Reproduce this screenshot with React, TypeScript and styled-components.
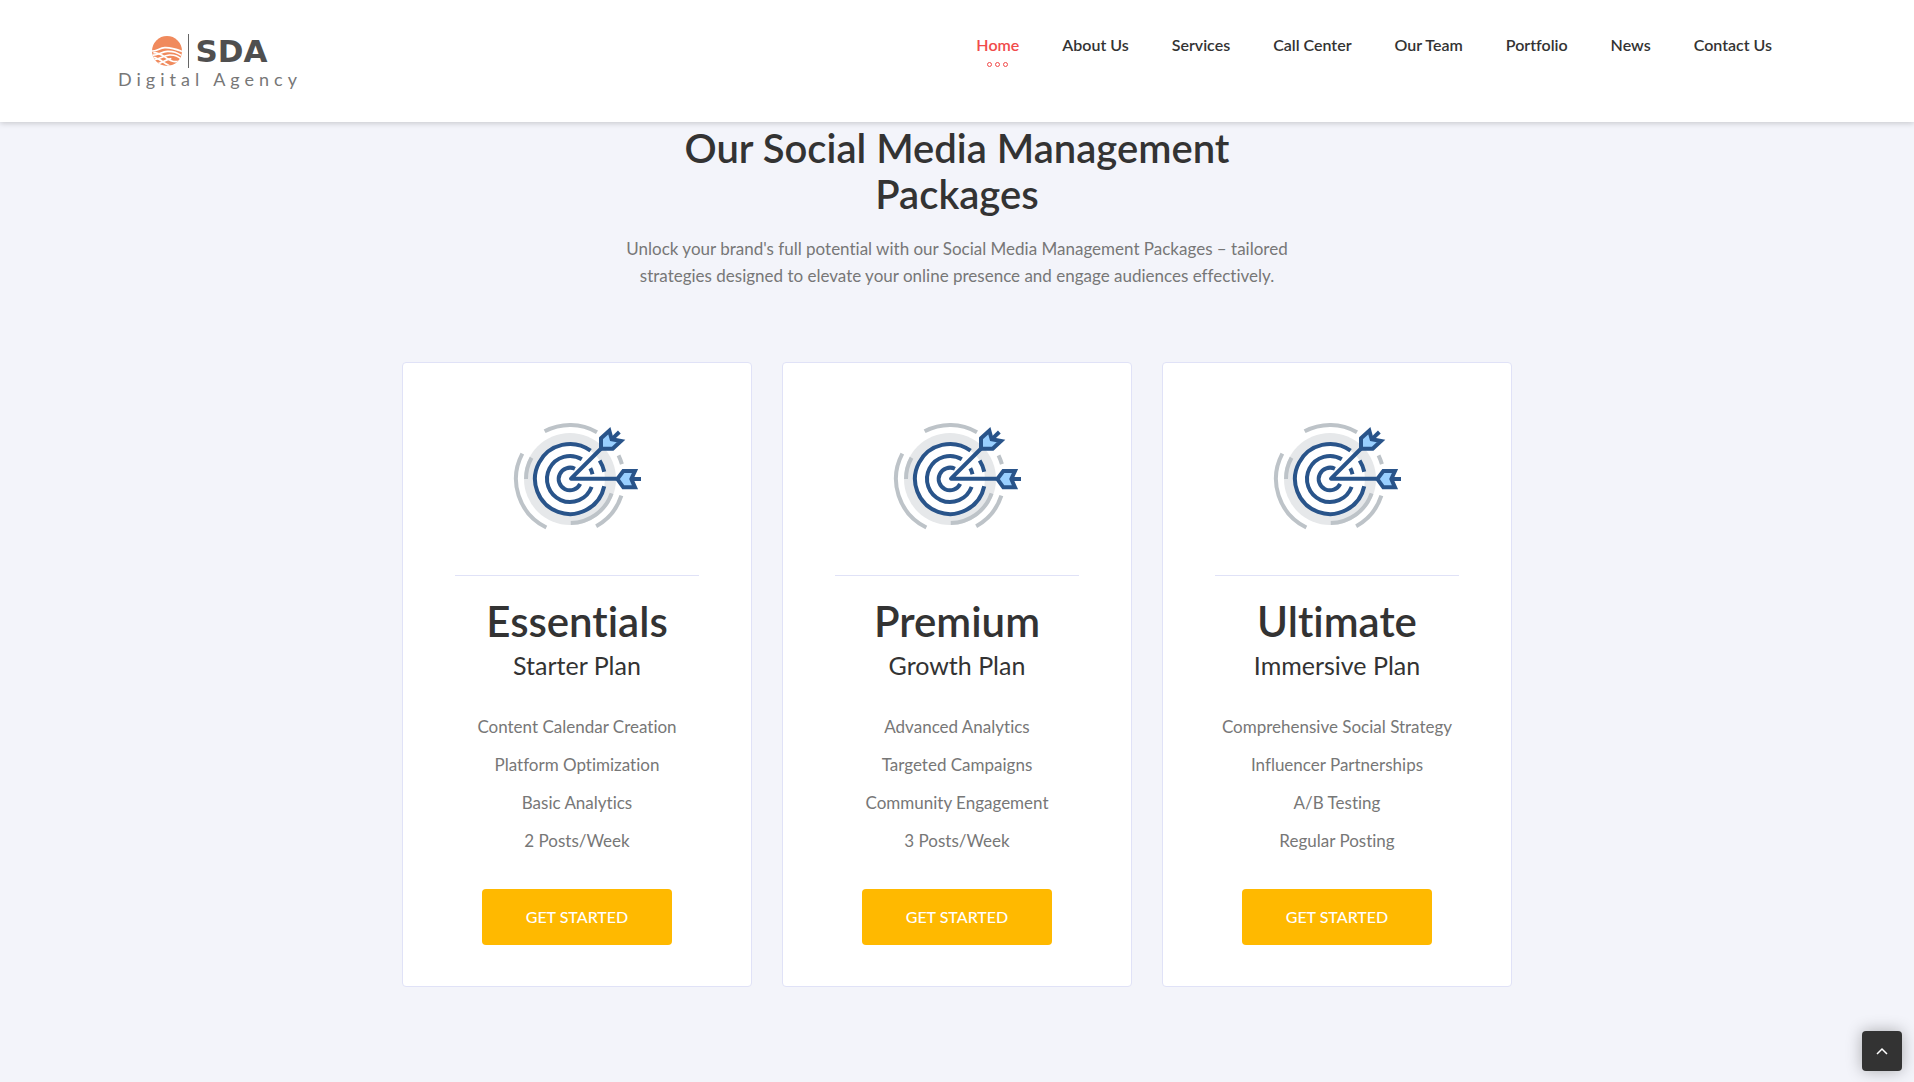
import React from "react";
import styled, { createGlobalStyle } from "styled-components";

const GlobalStyle = createGlobalStyle`
  *, *::before, *::after { box-sizing: border-box; }
  body {
    margin: 0;
    background: #f3f4fa;
    color: #333;
    font-family: Lato, "Open Sans", sans-serif;
    font-size: 17px;
    font-variant-ligatures: none;
  }
`;

const Header = styled.header`
  position: relative;
  display: flex;
  justify-content: space-between;
  align-items: flex-start;
  height: 122px;
  padding: 34px 142px 0 118px;
  background: #fff;
  box-shadow: 0 1px 6px rgba(0, 0, 0, 0.2);
`;

const Brand = styled.a`
  display: flex;
  flex-direction: column;
  align-items: center;
  color: #777;
  text-decoration: none;
`;

const BrandMark = styled.span`
  display: flex;
  align-items: center;
  height: 34px;
`;

const BrandRule = styled.span`
  width: 1px;
  height: 34px;
  margin: 0 6px;
  background: #666;
`;

const BrandName = styled.strong`
  color: #4f4f4f;
  font-family: "DejaVu Sans", sans-serif;
  font-size: 31px;
  font-weight: 700;
  line-height: 34px;
`;

const BrandLine = styled.span`
  font-size: 18px;
  line-height: 22px;
  letter-spacing: 5px;
`;

const Menu = styled.ul`
  display: flex;
  gap: 43px;
  margin: 0;
  padding: 0;
  list-style: none;
`;

const MenuLink = styled.a<{ $active?: boolean }>`
  display: flex;
  flex-direction: column;
  align-items: center;
  gap: 6px;
  color: ${(p) => (p.$active ? "#f14b4b" : "#333")};
  font-size: 16px;
  font-weight: 600;
  line-height: 22px;
  text-decoration: none;
`;

const Dots = styled.span`
  display: flex;
  gap: 3px;

  i {
    width: 5px;
    height: 5px;
    border: 1px solid #f14b4b;
    border-radius: 50%;
  }
`;

const Section = styled.section`
  display: flex;
  flex-direction: column;
  align-items: center;
  padding: 3px 15px 95px;
`;

const Intro = styled.div`
  max-width: 690px;
  margin-bottom: 73px;
  text-align: center;
`;

const Title = styled.h2`
  max-width: 600px;
  margin: 0 auto 18px;
  font-size: 40px;
  font-weight: 600;
  line-height: 46px;
`;

const Lead = styled.p`
  margin: 0;
  color: #777;
  font-size: 17px;
  line-height: 27px;
`;

const Cards = styled.div`
  display: grid;
  grid-template-columns: repeat(3, 1fr);
  gap: 30px;
  width: 100%;
  max-width: 1110px;
`;

const Card = styled.article`
  display: flex;
  flex-direction: column;
  align-items: center;
  padding: 57px 52px 41px;
  border: 1px solid #e0e2f7;
  border-radius: 4px;
  background: #fff;
  text-align: center;
`;

const IconArea = styled.div`
  align-self: stretch;
  padding-bottom: 45px;
  margin-bottom: 21px;
  border-bottom: 1px solid #e0e2f7;

  svg { display: block; margin: 0 auto; }
`;

const PlanName = styled.h3`
  margin: 0;
  font-size: 42px;
  font-weight: 600;
  line-height: 48px;
`;

const PlanKind = styled.p`
  margin: 4px 0 27px;
  font-size: 25px;
  line-height: 32px;
`;

const Features = styled.ul`
  margin: 0 0 29px;
  padding: 0;
  color: #777;
  font-size: 17px;
  line-height: 38px;
  list-style: none;
  white-space: nowrap;
`;

const Start = styled.button`
  width: 190px;
  height: 56px;
  border: 0;
  border-radius: 4px;
  background: #ffb900;
  color: #fff;
  font: 500 16px/24px Lato, sans-serif;
  text-transform: uppercase;
  cursor: pointer;
`;

const ToTop = styled.button`
  position: fixed;
  right: 12px;
  bottom: 11px;
  display: grid;
  place-items: center;
  width: 40px;
  height: 40px;
  padding: 0;
  border: 0;
  border-radius: 4px;
  background: #333;
  box-shadow: 0 0 16px rgba(0, 0, 0, 0.3);
  cursor: pointer;
`;

function arc(r: number, from: number, to: number) {
  const at = (deg: number) => {
    const a = (deg * Math.PI) / 180;
    return `${(240 + r * Math.cos(a)).toFixed(1)} ${(237 + r * Math.sin(a)).toFixed(1)}`;
  };
  return `M${at(from)}A${r} ${r} 0 ${to - from > 180 ? 1 : 0} 1 ${at(to)}`;
}

function TargetIcon() {
  return (
    <svg width="130" height="110" viewBox="66 60 390 330" fill="none" aria-hidden="true">
      <circle cx="240" cy="237" r="138" fill="#e6e8ea" />
      <circle cx="240" cy="237" r="105" fill="#fff" />
      <g stroke="#bdc3c8" strokeWidth="12">
        <path d={arc(162, -118, -60)} />
        <path d={arc(162, 116, 208)} />
        <path d={arc(162, 18, 61)} />
        <path d={arc(162, -26, -16)} />
        <path d={arc(132, 180, 209)} />
        <path d={arc(132, 19, 89)} />
      </g>
      <g stroke="#29548a" strokeWidth="12">
        <path d={arc(105, 12, 306)} />
        <path d={arc(105, -32, -12)} />
        <path d={arc(69, 20, 301)} />
        <path d={arc(69, -28, -12)} />
        <path d={arc(34, 26, 296)} />
        <path d="M338 141L243 236H380" strokeLinejoin="round" />
        <path d="M333 115L358 92L365 118L393 123L368 146H333Z" fill="#99cfff" />
        <path d="M365 118L388 96" />
        <path d="M382 237L400 213H435L424 237L435 262H400Z" fill="#99cfff" />
        <path d="M422 237H453" />
      </g>
    </svg>
  );
}

function SunMark() {
  return (
    <svg width="30" height="30" viewBox="0 0 90 90" aria-hidden="true">
      <clipPath id="sun"><circle cx="45" cy="45" r="45" /></clipPath>
      <g clipPath="url(#sun)">
        <path fill="#f08a5d" d="M0 0H90V90H0Z" />
        <g fill="none" stroke="#fff" strokeWidth="5">
          <path d="M-2 45C14 46 22 36 38 35S66 37 92 47" />
          <path d="M-2 58C20 58 28 47 46 46S74 50 92 60" />
          <path d="M4 50C24 50 34 60 48 69S66 78 84 76" />
          <path d="M2 72C22 70 34 58 52 57S78 62 92 72" />
          <path d="M2 64C16 64 26 72 36 80S50 90 66 92" />
          <path d="M14 84C30 82 42 70 58 68" />
        </g>
      </g>
    </svg>
  );
}

const links = ["Home", "About Us", "Services", "Call Center", "Our Team", "Portfolio", "News", "Contact Us"];

const plans = [
  { name: "Essentials", kind: "Starter Plan", features: ["Content Calendar Creation", "Platform Optimization", "Basic Analytics", "2 Posts/Week"] },
  { name: "Premium", kind: "Growth Plan", features: ["Advanced Analytics", "Targeted Campaigns", "Community Engagement", "3 Posts/Week"] },
  { name: "Ultimate", kind: "Immersive Plan", features: ["Comprehensive Social Strategy", "Influencer Partnerships", "A/B Testing", "Regular Posting"] },
];

export default function App() {
  return (
    <>
      <GlobalStyle />
      <Header>
        <Brand href="#">
          <BrandMark>
            <SunMark />
            <BrandRule />
            <BrandName>SDA</BrandName>
          </BrandMark>
          <BrandLine>Digital Agency</BrandLine>
        </Brand>
        <nav>
          <Menu>
            {links.map((label, i) => (
              <li key={label}>
                <MenuLink href="#" $active={i === 0}>
                  {label}
                  {i === 0 && <Dots><i /><i /><i /></Dots>}
                </MenuLink>
              </li>
            ))}
          </Menu>
        </nav>
      </Header>
      <main>
        <Section>
          <Intro>
            <Title>Our Social Media Management Packages</Title>
            <Lead>
              Unlock your brand's full potential with our Social Media Management Packages – tailored
              strategies designed to elevate your online presence and engage audiences effectively.
            </Lead>
          </Intro>
          <Cards>
            {plans.map((plan) => (
              <Card key={plan.name}>
                <IconArea><TargetIcon /></IconArea>
                <PlanName>{plan.name}</PlanName>
                <PlanKind>{plan.kind}</PlanKind>
                <Features>
                  {plan.features.map((f) => <li key={f}>{f}</li>)}
                </Features>
                <Start type="button">Get Started</Start>
              </Card>
            ))}
          </Cards>
        </Section>
      </main>
      <ToTop type="button" aria-label="Back to top">
        <svg width="12" height="8" viewBox="0 0 12 8" fill="none" stroke="#fff" strokeWidth="1.5" aria-hidden="true">
          <path d="M1 7L6 2L11 7" />
        </svg>
      </ToTop>
    </>
  );
}
